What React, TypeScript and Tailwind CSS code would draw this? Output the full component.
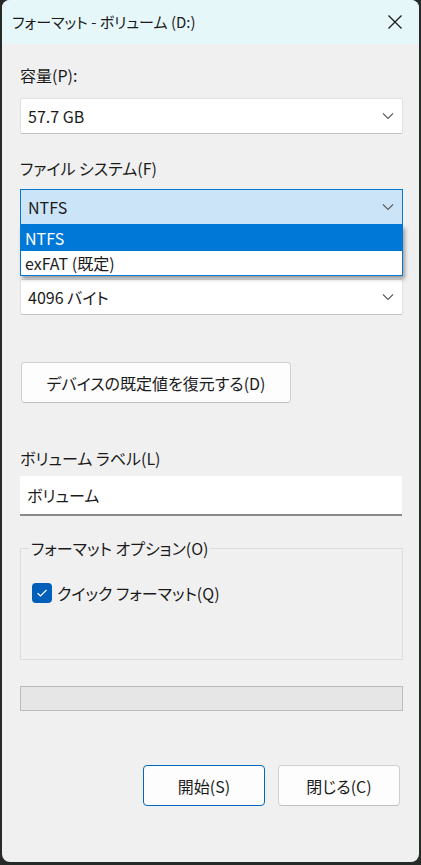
import React from "react";

const font = "font-['Noto_Sans_CJK_JP','Noto_Sans',sans-serif] [font-feature-settings:'palt']";

function Chevron() {
  return (
    <svg width="12" height="8" viewBox="0 0 12 8" className="shrink-0">
      <path d="M1 1.5 L6 6.5 L11 1.5" fill="none" stroke="#5c5c5c" strokeWidth="1.1" />
    </svg>
  );
}

function Combo({ value, focused }: { value: string; focused?: boolean }) {
  return (
    <div
      className={
        "flex h-[36px] w-[383px] items-center justify-between pl-[7px] pr-[8px] text-[16px] " +
        (focused ? "border border-[#0078d4] bg-[#cce4f7]" : "rounded-[2px] border border-[#e0e0e0] border-b-[#c4c4c4] bg-white")
      }
    >
      <span>{value}</span>
      <Chevron />
    </div>
  );
}

export default function App() {
  return (
    <div className={"min-h-screen bg-[#262b28] pb-[3px] text-[#1b1b1b] " + font}>
      <div className="ml-[2px] flex h-[862px] w-[417px] flex-col overflow-hidden rounded-[8px] bg-[#f0f0f0]">
        {/* title bar */}
        <div className="flex h-[44px] shrink-0 items-center justify-between bg-[#e6f7f9] pl-[10px] pr-[16px]">
          <span className="text-[15px]">フォーマット - ボリューム (D:)</span>
          <svg width="16" height="16" viewBox="0 0 16 16">
            <path d="M1.5 1.5 L14.5 14.5 M14.5 1.5 L1.5 14.5" stroke="#1b1b1b" strokeWidth="1.3" fill="none" />
          </svg>
        </div>

        <div className="flex flex-col pl-[18px]">
          <div className="mt-[20px] h-[22px] text-[16px] leading-[22px]">容量(P):</div>
          <div className="mt-[12px]">
            <Combo value="57.7 GB" />
          </div>

          <div className="mt-[23px] h-[22px] text-[16px] leading-[22px]">ファイル システム(F)</div>
          <div className="relative mt-[10px]">
            <Combo value="NTFS" focused />
            <div className="absolute left-0 top-[36px] z-10 w-[383px] border border-t-0 border-[#0078d4] bg-white text-[16px] shadow-[2px_3px_4px_rgba(0,0,0,0.35)]">
              <div className="flex h-[26px] items-center bg-[#0078d7] pl-[4px] text-white">NTFS</div>
              <div className="flex h-[24px] items-center pl-[4px]">exFAT (既定)</div>
            </div>
          </div>

          {/* allocation size combo, its label is hidden under the open list */}
          <div className="mt-[54px]">
            <Combo value="4096 バイト" />
          </div>

          <button className="ml-[1px] mt-[47px] flex h-[41px] w-[270px] items-center justify-center rounded-[4px] border border-[#d0d0d0] border-b-[#c0c0c0] bg-[#fdfdfd] text-[16px]">
            デバイスの既定値を復元する(D)
          </button>

          <div className="mt-[44px] h-[22px] text-[16px] leading-[22px]">ボリューム ラベル(L)</div>
          <div className="mt-[7px] flex h-[40px] w-[382px] items-center border-b-2 border-[#8a8a8a] bg-white pl-[7px] text-[16px]">
            ボリューム
          </div>

          {/* group box */}
          <div className="relative mt-[32px] h-[112px] w-[383px] border border-[#dcdcdc]">
            <span className="absolute left-[8px] top-[-11px] bg-[#f0f0f0] px-[2px] text-[16px] leading-[20px]">
              フォーマット オプション(O)
            </span>
            <div className="mt-[32px] flex items-center pl-[11px]">
              <div className="flex h-[20px] w-[20px] items-center justify-center rounded-[4px] bg-[#005fb8]">
                <svg width="12" height="10" viewBox="0 0 12 10">
                  <path d="M1.5 5.2 L4.5 8 L10.5 2" fill="none" stroke="white" strokeWidth="1.2" />
                </svg>
              </div>
              <span className="ml-[5px] text-[16px]">クイック フォーマット(Q)</span>
            </div>
          </div>

          {/* progress */}
          <div className="mt-[26px] h-[25px] w-[383px] border border-[#bcbcbc] bg-[#e6e6e6]" />

          <div className="mt-[54px] flex w-[380px] justify-end gap-[13px]">
            <button className="flex h-[41px] w-[122px] items-center justify-center rounded-[4px] border border-[#0067c0] bg-[#fdfdfd] text-[16px]">
              開始(S)
            </button>
            <button className="flex h-[41px] w-[122px] items-center justify-center rounded-[4px] border border-[#d0d0d0] border-b-[#c0c0c0] bg-[#fdfdfd] text-[16px]">
              閉じる(C)
            </button>
          </div>
        </div>
      </div>
    </div>
  );
}
